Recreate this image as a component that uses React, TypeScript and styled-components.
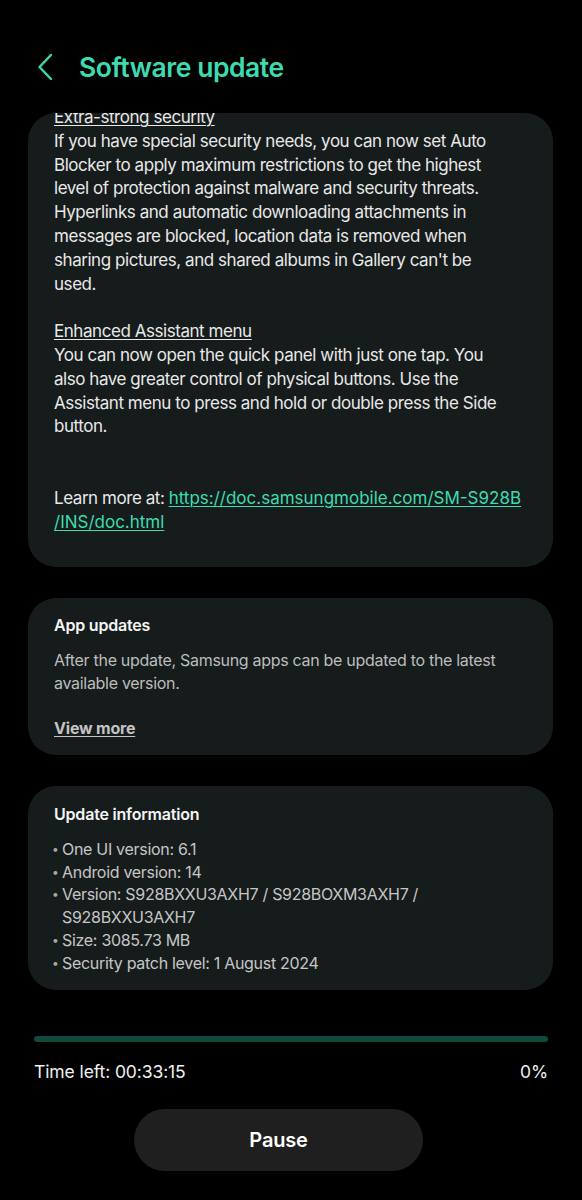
import React from "react";
import styled, { createGlobalStyle } from "styled-components";

const Global = createGlobalStyle`
  html, body { margin: 0; padding: 0; background: #000; }
  body { font-family: Inter, "Noto Sans", sans-serif; color: #fff; }
`;

const Screen = styled.div`
  width: 582px;
  height: 1200px;
  background: #000;
  display: flex;
  flex-direction: column;
  overflow: hidden;
`;

const Header = styled.header`
  flex: none;
  height: 113px;
  display: flex;
  align-items: center;
  padding: 20px 0 0 34px;
  gap: 23px;
  box-sizing: border-box;
`;

const BackButton = styled.button`
  background: none;
  border: none;
  padding: 0;
  width: 22px;
  height: 30px;
  display: flex;
  align-items: center;
  justify-content: center;
`;

const Title = styled.h1`
  margin: 0;
  font-size: 26.5px;
  font-weight: 600;
  color: #3ddbb0;
  letter-spacing: -0.45px;
`;

const Cards = styled.div`
  flex: none;
  display: flex;
  flex-direction: column;
  gap: 31px;
  padding: 0 29px 0 28px;
`;

const Card = styled.section<{ $pt?: number; $pb?: number }>`
  flex: none;
  background: #161c1c;
  border-radius: 28px;
  overflow: hidden;
  padding: ${(p) => p.$pt ?? 15}px 26px ${(p) => p.$pb ?? 15}px 26px;
`;

const Notes = styled.div`
  margin-top: -7px;
  font-size: 17px;
  line-height: 23.8px;
  color: #e8e8e8;
  letter-spacing: -0.45px;
  white-space: nowrap;
`;

const Heading = styled.span`
  text-decoration: underline;
  text-underline-offset: 2px;
  text-decoration-thickness: 1px;
`;

const Gap = styled.div<{ $lines: number }>`
  height: ${(p) => p.$lines * 23.8}px;
`;

const Link = styled.a`
  color: #3ddbb0;
  letter-spacing: 0;
  text-decoration: underline;
  text-underline-offset: 2px;
  text-decoration-thickness: 1px;
`;

const CardTitle = styled.h2`
  margin: 0;
  font-size: 16px;
  line-height: 24px;
  font-weight: 600;
  color: #f4f4f4;
  letter-spacing: -0.2px;
`;

const CardBody = styled.p`
  margin: 11.5px 0 0 0;
  font-size: 16px;
  line-height: 23px;
  color: #bcbcbc;
  letter-spacing: -0.3px;
  white-space: nowrap;
`;

const MoreLink = styled.a`
  display: block;
  margin-top: 21.5px;
  font-size: 16px;
  line-height: 24px;
  font-weight: 700;
  color: #c4c4c4;
  text-decoration: underline;
  text-underline-offset: 2px;
  letter-spacing: -0.2px;
`;

const InfoList = styled.ul`
  list-style: none;
  margin: 11.5px 0 0 0;
  padding: 0;
  font-size: 16px;
  line-height: 22.8px;
  color: #c6c6c6;
  letter-spacing: -0.3px;
  white-space: nowrap;
`;

const InfoItem = styled.li`
  display: flex;
  margin-left: -2px;
  &::before {
    content: "•";
    width: 10px;
    flex: none;
    font-size: 12px;
    color: #a8a8a8;
  }
`;

const Footer = styled.div`
  margin-top: auto;
  flex: none;
  padding: 0 34px 29px 34px;
  display: flex;
  flex-direction: column;
`;

const Track = styled.div`
  height: 6px;
  border-radius: 3px;
  background: #0f4a3c;
`;

const StatusRow = styled.div`
  margin-top: 18px;
  display: flex;
  justify-content: space-between;
  font-size: 17.5px;
  line-height: 24px;
  color: #f0f0f0;
  letter-spacing: -0.1px;
`;

const PauseButton = styled.button`
  align-self: flex-start;
  margin: 25px 0 0 100px;
  width: 289px;
  height: 62px;
  border-radius: 31px;
  border: none;
  background: #1f1f1f;
  color: #fff;
  font-family: Inter, sans-serif;
  font-size: 20px;
  font-weight: 600;
  letter-spacing: -0.2px;
`;

export default function App() {
  return (
    <Screen>
      <Global />
      <Header>
        <BackButton aria-label="Back">
          <svg width="18" height="28" viewBox="0 0 18 28" fill="none">
            <path d="M15 2 L3.5 14 L15 26" stroke="#3ddbb0" strokeWidth="2.4" strokeLinecap="round" strokeLinejoin="round" />
          </svg>
        </BackButton>
        <Title>Software update</Title>
      </Header>
      <Cards>
        <Card $pt={0} $pb={33}>
          <Notes>
            <Heading>Extra-strong security</Heading>
            <br />
            If you have special security needs, you can now set Auto
            <br />
            Blocker to apply maximum restrictions to get the highest
            <br />
            level of protection against malware and security threats.
            <br />
            Hyperlinks and automatic downloading attachments in
            <br />
            messages are blocked, location data is removed when
            <br />
            sharing pictures, and shared albums in Gallery can't be
            <br />
            used.
            <Gap $lines={1} />
            <Heading>Enhanced Assistant menu</Heading>
            <br />
            You can now open the quick panel with just one tap. You
            <br />
            also have greater control of physical buttons. Use the
            <br />
            Assistant menu to press and hold or double press the Side
            <br />
            button.
            <Gap $lines={2} />
            Learn more at: <Link href="#">https://doc.samsungmobile.com/SM-S928B</Link>
            <br />
            <Link href="#">/INS/doc.html</Link>
          </Notes>
        </Card>
        <Card $pt={15} $pb={15}>
          <CardTitle>App updates</CardTitle>
          <CardBody>
            After the update, Samsung apps can be updated to the latest
            <br />
            available version.
          </CardBody>
          <MoreLink href="#">View more</MoreLink>
        </Card>
        <Card $pt={16} $pb={15}>
          <CardTitle>Update information</CardTitle>
          <InfoList>
            <InfoItem>One UI version: 6.1</InfoItem>
            <InfoItem>Android version: 14</InfoItem>
            <InfoItem>
              <span>
                Version: S928BXXU3AXH7 / S928BOXM3AXH7 /
                <br />
                S928BXXU3AXH7
              </span>
            </InfoItem>
            <InfoItem>Size: 3085.73 MB</InfoItem>
            <InfoItem>Security patch level: 1 August 2024</InfoItem>
          </InfoList>
        </Card>
      </Cards>
      <Footer>
        <Track />
        <StatusRow>
          <span>Time left: 00:33:15</span>
          <span>0%</span>
        </StatusRow>
        <PauseButton>Pause</PauseButton>
      </Footer>
    </Screen>
  );
}
